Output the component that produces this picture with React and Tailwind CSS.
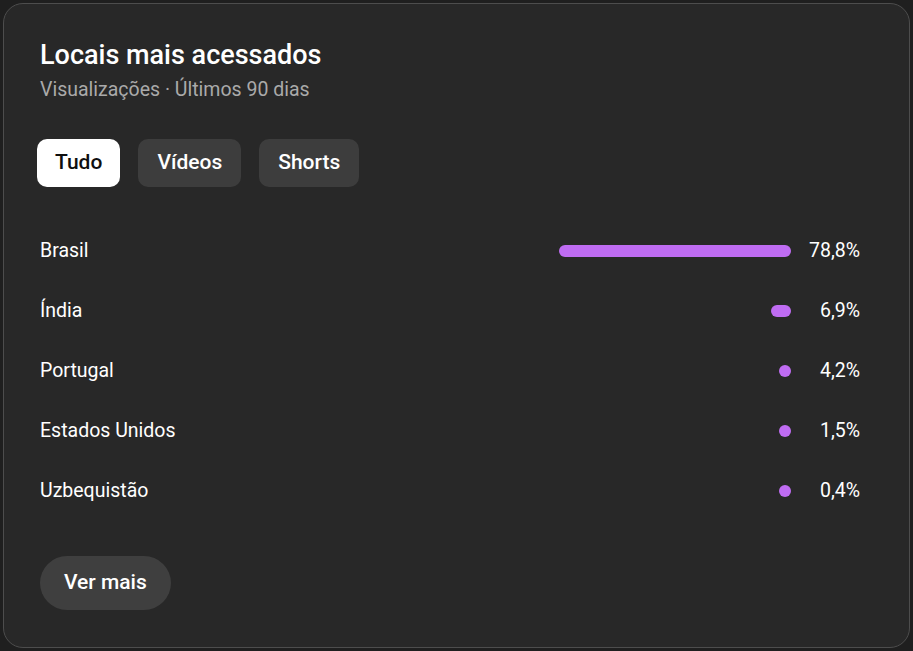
import React from "react";

const rows = [
  { name: "Brasil", pct: 78.8 },
  { name: "Índia", pct: 6.9 },
  { name: "Portugal", pct: 4.2 },
  { name: "Estados Unidos", pct: 1.5 },
  { name: "Uzbequistão", pct: 0.4 },
];

const fmt = (n) => n.toFixed(1).replace(".", ",") + "%";

const Tab = ({ label, active }) => (
  <button
    className={
      active
        ? "h-[48px] px-[18px] rounded-[10px] bg-white text-[#0f0f0f] text-[21px] font-medium"
        : "h-[48px] px-[19px] rounded-[10px] bg-[#3d3d3d] text-white text-[21px] font-medium"
    }
  >
    {label}
  </button>
);

export default function App() {
  const max = 78.8;
  return (
    <div
      className="h-[651px] w-[913px] bg-[#1f1f1f] p-[3px]"
      style={{ fontFamily: "Roboto, 'Noto Sans', sans-serif" }}
    >
      <div className="h-full rounded-[20px] border border-[#4d4d4d] bg-[#282828] pl-[36px] pr-[49px] pt-[35px]">
        <h1 className="text-[27px] leading-[32px] font-medium text-white">Locais mais acessados</h1>
        <p className="mt-[6px] text-[19.5px] leading-[26px] text-[#aaaaaa]">
          Visualizações · Últimos 90 dias
        </p>

        <div className="mt-[36px] flex gap-[18px] -ml-[3px]">
          <Tab label="Tudo" active />
          <Tab label="Vídeos" />
          <Tab label="Shorts" />
        </div>

        <div className="mt-[34px] flex flex-col">
          {rows.map((r) => (
            <div key={r.name} className="h-[60px] flex items-center">
              <span className="flex-1 text-[19.5px] text-white">{r.name}</span>
              <div className="flex w-[232px] justify-end">
                <div
                  className="h-[12px] rounded-full bg-[#bf6cf2]"
                  style={{ width: Math.max(12, (r.pct / max) * 232) + "px" }}
                />
              </div>
              <span className="w-[69px] text-right text-[19.5px] text-white">{fmt(r.pct)}</span>
            </div>
          ))}
        </div>

        <button className="mt-[35px] h-[54px] px-[24px] rounded-full bg-[#3f3f3f] text-white text-[21px] font-medium">
          Ver mais
        </button>
      </div>
    </div>
  );
}
